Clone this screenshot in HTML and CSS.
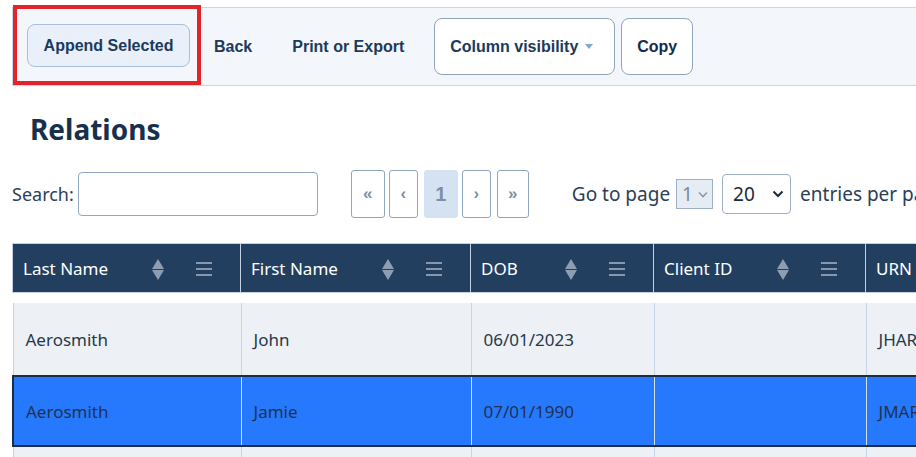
FILE: index.html
```html
<!DOCTYPE html>
<html lang="en">
<head>
    <meta charset="UTF-8">
    <meta name="viewport" content="width=device-width, initial-scale=1.0">
    <title>Relations</title>
    <link rel="stylesheet" href="styles.css">
</head>
<body>
    <div class="page">
        <div class="toolbar">
            <button class="btn btn-primary">Append Selected</button>
            <button class="btn btn-plain btn-back">Back</button>
            <button class="btn btn-plain btn-print">Print or Export</button>
            <button class="btn btn-outline btn-colvis">Column visibility <span class="caret"></span></button>
            <button class="btn btn-outline btn-copy">Copy</button>
        </div>
        <div class="highlight"></div>

        <h1 class="title">Relations</h1>

        <div class="controls">
            <label class="search">Search:<input type="text"></label>
            <div class="pager">
                <span class="pg pg-wide">&laquo;</span>
                <span class="pg">&lsaquo;</span>
                <span class="pg pg-wide active">1</span>
                <span class="pg">&rsaquo;</span>
                <span class="pg pg-last">&raquo;</span>
            </div>
            <div class="goto">
                Go to page
                <span class="select select-small">1<svg width="10" height="7" viewBox="0 0 10 7"><path d="M1 1.5l4 4 4-4" fill="none" stroke="#8a9bb0" stroke-width="1.6"/></svg></span>
                <span class="select select-len">20<svg width="12" height="8" viewBox="0 0 12 8"><path d="M1.5 1.5l4.5 4.5 4.5-4.5" fill="none" stroke="#1c2a38" stroke-width="2"/></svg></span>
                entries per page
            </div>
        </div>

        <div class="grid-head">
            <table class="grid">
                <colgroup>
                    <col class="c1"><col class="c2"><col class="c3"><col class="c4"><col class="c5">
                </colgroup>
                <thead>
                    <tr>
                        <th><span>Last Name</span><i class="sort"></i><i class="menu"></i></th>
                        <th><span>First Name</span><i class="sort"></i><i class="menu"></i></th>
                        <th><span>DOB</span><i class="sort"></i><i class="menu"></i></th>
                        <th><span>Client ID</span><i class="sort"></i><i class="menu"></i></th>
                        <th><span>URN</span><i class="sort"></i><i class="menu"></i></th>
                    </tr>
                </thead>
            </table>
        </div>
        <div class="grid-body">
            <table class="grid">
                <colgroup>
                    <col class="c1"><col class="c2"><col class="c3"><col class="c4"><col class="c5">
                </colgroup>
                <tbody>
                    <tr>
                        <td>Aerosmith</td><td>John</td><td>06/01/2023</td><td></td><td>JHAR0601</td>
                    </tr>
                    <tr class="selected">
                        <td>Aerosmith</td><td>Jamie</td><td>07/01/1990</td><td></td><td>JMAR0701</td>
                    </tr>
                    <tr>
                        <td>Aerosmith</td><td>Kate</td><td>12/03/1985</td><td></td><td>KTAR1203</td>
                    </tr>
                </tbody>
            </table>
        </div>
    </div>
</body>
</html>
```

FILE: styles.css
```css
html, body {
    margin: 0;
    padding: 0;
    background-color: #fff;
    overflow: hidden;
}
body {
    font-family: "Noto Sans", "Open Sans", sans-serif;
    color: #23374d;
}
.page {
    position: relative;
    width: 1160px;
    padding-left: 12px;
    padding-top: 7px;
}

/* toolbar */
.toolbar {
    display: flex;
    align-items: center;
    height: 77px;
    padding-left: 14px;
    background-color: #f3f6fb;
    border: 1px solid #c8d6e6;
}
.btn {
    font-family: "Liberation Sans", Arial, sans-serif;
    font-weight: bold;
    font-size: 16px;
    color: #1b3a5c;
    background: none;
    border: 1px solid transparent;
    border-radius: 8px;
    padding: 0 15px;
    cursor: pointer;
}
.btn-primary {
    height: 43px;
    width: 163px;
    margin-top: -2px;
    background-color: #e9f0f9;
    border-color: #a9bfd7;
}
.btn-plain {
    height: 43px;
}
.btn-back {
    margin-left: 8px;
}
.btn-print {
    margin-left: 8px;
}
.btn-outline {
    height: 57px;
    background-color: #fff;
    border-color: #8fa6c0;
}
.btn-colvis {
    width: 181px;
    margin-left: 14px;
    text-align: left;
}
.btn-copy {
    width: 72px;
    margin-left: 6px;
    color: #132d4a;
}
.caret {
    display: inline-block;
    width: 0;
    height: 0;
    margin-left: 2px;
    vertical-align: 3px;
    border-left: 4px solid transparent;
    border-right: 4px solid transparent;
    border-top: 5px solid #7aaad8;
}
.highlight {
    position: absolute;
    left: 13px;
    top: 5px;
    width: 188px;
    height: 80px;
    box-sizing: border-box;
    border: 4px solid #e3222a;
}

/* heading */
.title {
    margin: 23px 0 0 18px;
    font-size: 28px;
    line-height: 40px;
    font-weight: bold;
    color: #17314d;
}

/* search, pagination, page length */
.controls {
    display: flex;
    align-items: center;
    height: 50px;
    margin-top: 20px;
    font-size: 18px;
    color: #2b4057;
}
.search {
    display: flex;
    align-items: center;
}
.search input {
    width: 240px;
    height: 44px;
    margin-left: 4px;
    box-sizing: border-box;
    border: 1px solid #8fa8c4;
    border-radius: 4px;
}
.pager {
    display: flex;
    gap: 4px;
    margin-left: 33px;
}
.pg {
    display: flex;
    align-items: center;
    justify-content: center;
    width: 29px;
    height: 48px;
    box-sizing: border-box;
    border: 1px solid #8fa6c0;
    border-radius: 3px;
    font-family: "Liberation Sans", Arial, sans-serif;
    font-weight: bold;
    font-size: 17px;
    color: #7d90a8;
}
.pg-wide {
    width: 34px;
}
.pg-last {
    width: 32px;
    margin-left: 2px;
}
.pg.active {
    margin-left: 2px;
    background-color: #d5e2f1;
    border-color: #d5e2f1;
    font-size: 20px;
}
.goto {
    display: flex;
    align-items: center;
    margin-left: 43px;
    font-size: 19px;
    white-space: nowrap;
}
.select {
    display: flex;
    align-items: center;
    justify-content: space-between;
    box-sizing: border-box;
    border: 1px solid #9eb0c5;
}
.select-small {
    width: 37px;
    height: 30px;
    margin-left: 6px;
    padding: 0 4px 0 5px;
    background-color: #e6ecf3;
    color: #7a8ba0;
}
.select-len {
    width: 69px;
    height: 40px;
    margin: 0 9px 0 9px;
    padding: 0 6px 0 10px;
    border-radius: 4px;
    color: #1c2a38;
}

/* table */
.grid {
    border-collapse: collapse;
    table-layout: fixed;
    width: 1060px;
    font-size: 17px;
}
.c1 { width: 228px; }
.c2 { width: 230px; }
.c3 { width: 183px; }
.c4 { width: 212px; }
.c5 { width: 207px; }
.grid-head {
    margin-top: 24px;
}
.grid th {
    position: relative;
    height: 48px;
    padding: 0 10px;
    text-align: left;
    font-weight: normal;
    color: #fff;
    background-color: #233f60;
    border: 1px solid #c3d2e3;
}
.grid th + th {
    border-left: 1px solid #b7c9dc;
}
.sort {
    position: absolute;
    right: 76px;
    top: 15px;
    width: 12px;
    height: 21px;
}
.sort::before,
.sort::after {
    content: "";
    position: absolute;
    left: 0;
    border-left: 6px solid transparent;
    border-right: 6px solid transparent;
}
.sort::before {
    top: 0;
    border-bottom: 10px solid #8d9db2;
}
.sort::after {
    bottom: 0;
    border-top: 10px solid #8d9db2;
}
.menu {
    position: absolute;
    right: 28px;
    top: 18px;
    width: 16px;
    height: 2px;
    background-color: #8797ac;
    box-shadow: 0 6px 0 #8797ac, 0 12px 0 #8797ac;
}
.grid-body {
    margin-top: 10px;
}
.grid td {
    height: 72px;
    padding: 0 12px;
    color: #26384b;
    background-color: #edf0f5;
    border-left: 1px solid #c5d4e6;
}
.grid tr.selected td {
    height: 68px;
    background-color: #2679fc;
    color: #1d3352;
    border-top: 2px solid #1b2d42;
    border-bottom: 2px solid #1b2d42;
    border-left-color: #d0e0f5;
}
.grid tr.selected td:first-child {
    border-left: 2px solid #1b2d42;
}
```
